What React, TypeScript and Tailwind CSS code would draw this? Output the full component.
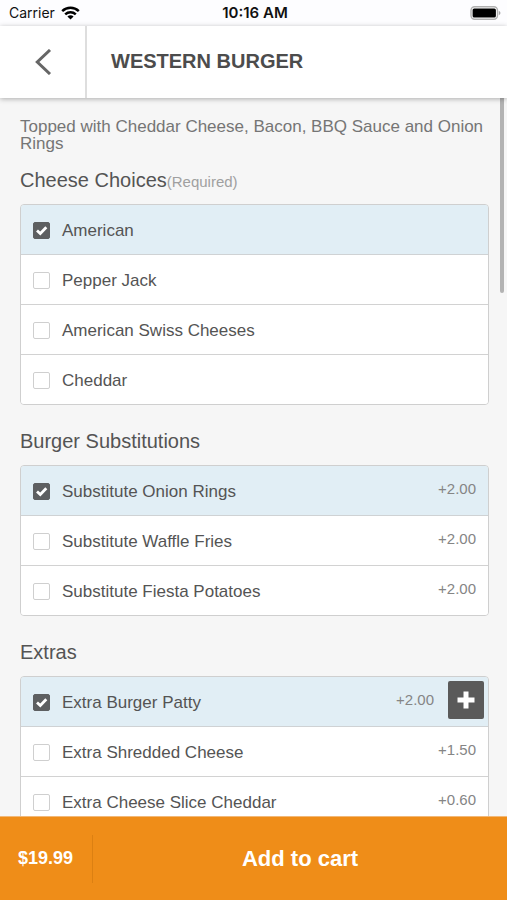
import { useState } from "react";

interface IOption {
    name: string;
    price?: string;
    selected?: boolean;
    stackable?: boolean;
}

interface IOptionGroup {
    title: string;
    required?: boolean;
    options: IOption[];
}

const groups: IOptionGroup[] = [
    {
        title: "Cheese Choices",
        required: true,
        options: [
            { name: "American", selected: true },
            { name: "Pepper Jack" },
            { name: "American Swiss Cheeses" },
            { name: "Cheddar" },
        ],
    },
    {
        title: "Burger Substitutions",
        options: [
            { name: "Substitute Onion Rings", price: "+2.00", selected: true },
            { name: "Substitute Waffle Fries", price: "+2.00" },
            { name: "Substitute Fiesta Potatoes", price: "+2.00" },
        ],
    },
    {
        title: "Extras",
        options: [
            { name: "Extra Burger Patty", price: "+2.00", selected: true, stackable: true },
            { name: "Extra Shredded Cheese", price: "+1.50" },
            { name: "Extra Cheese Slice Cheddar", price: "+0.60" },
        ],
    },
];

function StatusBar() {
    return (
        <div className="grid h-[26px] shrink-0 grid-cols-3 items-center bg-[#fdfdff] pr-[6px] pl-[9px] font-[Inter,sans-serif] text-[14px] leading-[26px] text-[#111]">
            <div className="flex items-center gap-[6px]">
                <span>Carrier</span>
                <svg width="19" height="14" viewBox="0 0 19 14" fill="none" stroke="#000" strokeWidth="2.5" aria-hidden="true">
                    <path d="M1.2 5.2C5.9 .7 13.1 .7 17.8 5.2" />
                    <path d="M4.2 8.3C7.2 5.5 11.8 5.5 14.8 8.3" />
                    <path d="M9.5 13.5L6.4 10.4C8.2 8.8 10.8 8.8 12.6 10.4Z" fill="#000" stroke="none" />
                </svg>
            </div>
            <span className="text-center text-[15px] font-semibold">10:16 AM</span>
            <svg className="justify-self-end" width="31" height="14" viewBox="0 0 31 14" aria-hidden="true">
                <rect x="1" y=".8" width="26.5" height="12.4" rx="3.6" fill="#fff" stroke="#b0b0b0" strokeWidth="1.4" />
                <rect x="2.6" y="2.4" width="23.3" height="9.2" rx="1.6" fill="#000" />
                <path d="M28.8 5C31 5.8 31 8.2 28.8 9Z" fill="#a5a5a5" />
            </svg>
        </div>
    );
}

function Checkbox({ id, checked, onChange }: { id: string, checked: boolean, onChange: () => void }) {
    return (
        <span className="grid size-[17px] shrink-0">
            <input
                id={id}
                type="checkbox"
                checked={checked}
                onChange={onChange}
                className="col-start-1 row-start-1 size-[17px] appearance-none rounded-[2px] border border-[#cfcfcf] bg-white checked:border-[#5d5f61] checked:bg-[#5d5f61]" />
            {checked && (
                <svg className="pointer-events-none z-10 col-start-1 row-start-1" viewBox="0 0 17 17" fill="none" stroke="#fff" strokeWidth="2.8" aria-hidden="true">
                    <path d="M4 8.4L7.3 11.5L13.3 5.3" />
                </svg>
            )}
        </span>
    );
}

function OptionRow({ option, id }: { option: IOption, id: string }) {
    const [checked, setChecked] = useState(!!option.selected);

    return (
        <li className={checked ? "flex h-[50px] items-center border-b border-[#cfd2d4] bg-[#e1eef5] last:h-[49px] last:border-b-0" : "flex h-[50px] items-center border-b border-[#d2d2d2] bg-white last:h-[49px] last:border-b-0"}>
            <div className="flex flex-1 items-center gap-3 pt-[2px] pl-3">
                <Checkbox id={id} checked={checked} onChange={() => setChecked(!checked)} />
                <label htmlFor={id} className="flex-1 text-[17px] leading-5 text-[#545454]">{option.name}</label>
            </div>
            {option.price && <span className={option.stackable ? "pr-[14px] pb-1 text-[15px] leading-5 text-[#858585]" : "pr-3 pb-1 text-[15px] leading-5 text-[#858585]"}>{option.price}</span>}
            {option.stackable && (
                <button type="button" aria-label={`Add another ${option.name}`} className="mr-1 mb-1 flex h-[38px] w-9 items-center justify-center rounded-[2px] bg-[#5a5a5a]">
                    <svg width="18" height="18" viewBox="0 0 18 18" fill="none" stroke="#fff" strokeWidth="5" aria-hidden="true">
                        <path d="M9 .5V17.5M.5 9H17.5" />
                    </svg>
                </button>
            )}
        </li>
    );
}

function OptionGroup({ group, index }: { group: IOptionGroup, index: number }) {
    return (
        <section className="mb-6">
            <h2 className="mb-3 text-[20px] leading-6 text-[#545454]">
                {group.title}
                {group.required && <span className="text-[15px] leading-none text-[#a0a0a0]">(Required)</span>}
            </h2>
            <ul className="overflow-hidden rounded-[4px] border border-[#cfcfcf]">
                {group.options.map((option, i) => <OptionRow key={option.name} option={option} id={`option-${index}-${i}`} />)}
            </ul>
        </section>
    );
}

export default function App() {
    return (
        <div className="flex h-screen flex-col overflow-hidden bg-[#f6f6f6] font-['Liberation_Sans',Arial,sans-serif]">
            <StatusBar />
            <header className="z-10 flex h-[72px] shrink-0 bg-white shadow-[0_1px_5px_rgba(0,0,0,0.3)]">
                <button type="button" aria-label="Back" className="flex w-[87px] items-center justify-center border-r-2 border-[#dedede] pl-px">
                    <svg width="18" height="26" viewBox="0 0 18 26" fill="none" stroke="#666" strokeWidth="3" aria-hidden="true">
                        <path d="M16 1L3.3 13L16 25" />
                    </svg>
                </button>
                <h1 className="flex items-center pb-[2px] pl-6 text-[20px] leading-6 font-bold text-[#4c4c4c]">WESTERN BURGER</h1>
            </header>
            <main className="relative min-h-0 flex-1 overflow-hidden pt-5 pr-[18px] pl-5">
                <p className="mb-4 text-[17px] leading-[17px] text-[#757575]">Topped with Cheddar Cheese, Bacon, BBQ Sauce and Onion Rings</p>
                {groups.map((group, index) => <OptionGroup key={group.title} group={group} index={index} />)}
                <div className="absolute top-0 right-[3px] h-[195px] w-1 rounded-b-full bg-[#b3b3b3]" />
            </main>
            <footer className="flex h-[84px] shrink-0 items-center border-t border-[#f2b877] bg-[#ef8d18] text-white">
                <div className="flex h-12 w-[93px] items-center border-r border-[#dc8012] pl-[18px] text-[18px] font-bold">$19.99</div>
                <button type="button" className="h-full flex-1 text-center text-[22px] font-bold">Add to cart</button>
            </footer>
        </div>
    );
}
